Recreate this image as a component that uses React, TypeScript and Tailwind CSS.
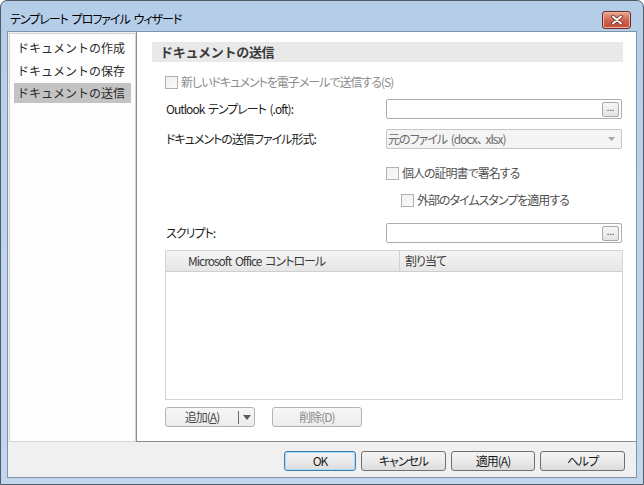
import React from "react";

const jp = "font-['Noto_Sans_CJK_JP','Noto_Sans',sans-serif]";
const palt = "[font-feature-settings:'palt'] tracking-[-1px] [word-spacing:2px]";

function CheckBox({ label, dim = false }: { label: string; dim?: boolean }) {
  return (
    <div className="flex h-[20px] items-center">
      <span className="h-[13px] w-[13px] border border-[#b1b1b1] bg-gradient-to-br from-[#f0f0f0] to-[#fafafa]" />
      <span className={`ml-[3px] text-[12px] ${palt} ${dim ? "text-[#8c8c8c]" : "text-[#505050]"}`}>{label}</span>
    </div>
  );
}

function BrowseBox() {
  return (
    <div className="flex h-[20px] w-[236px] items-center justify-end rounded-[2px] border border-[#abadb3] bg-white pr-[2px]">
      <div className="flex h-[15px] w-[17px] items-center justify-center rounded-[2px] border border-[#a8a8a8] bg-gradient-to-b from-[#f6f6f6] to-[#e4e4e4] pb-[3px] text-[9px] leading-none text-[#444]">
        ...
      </div>
    </div>
  );
}

function FieldRow({ label, children }: { label: string; children: React.ReactNode }) {
  return (
    <div className="flex h-[20px] items-center">
      <div className={`w-[221px] pl-[1px] text-[12px] text-[#1e1e1e] ${palt}`}>{label}</div>
      {children}
    </div>
  );
}

function DlgButton({ label, w, focus = false }: { label: string; w: string; focus?: boolean }) {
  return (
    <button
      type="button"
      className={`flex h-[20px] ${w} items-center justify-center rounded-[3px] border ${
        focus ? "border-[#3c7fb1] shadow-[inset_0_0_0_1px_#a8dcf5]" : "border-[#707070]"
      } bg-gradient-to-b from-[#f3f3f3] via-[#ebebeb] to-[#dcdcdc] text-[12px] text-[#1a1a1a] ${palt}`}
    >
      {label}
    </button>
  );
}

export default function App() {
  const items = ["ドキュメントの作成", "ドキュメントの保存", "ドキュメントの送信"];
  return (
    <div className={`h-[485px] w-[644px] bg-white ${jp}`}>
      <div className="flex h-[485px] w-[644px] flex-col rounded-t-[7px] border border-[#4f5b68] bg-gradient-to-b from-[#b4cde8] via-[#bed4ec] to-[#c2d7ee]">
        {/* title bar */}
        <div className="flex h-[30px] items-center justify-between pl-[9px] pr-[12px]">
          <span className={`pt-[5px] text-[12px] text-black ${palt}`}>テンプレート プロファイル ウィザード</span>
          <div className="mt-[7px] flex h-[18px] w-[29px] items-center justify-center rounded-[3px] border border-[#6b2a22] bg-gradient-to-b from-[#e9a898] via-[#d0654f] to-[#c14a30] shadow-[inset_0_0_0_1px_#f0b5a6]">
            <svg width="12" height="10" viewBox="0 0 12 10">
              <path d="M2 1.5 L10 8.5 M10 1.5 L2 8.5" stroke="#5b2a22" strokeWidth="3.6" strokeLinecap="round" />
              <path d="M2 1.5 L10 8.5 M10 1.5 L2 8.5" stroke="#ffffff" strokeWidth="2" strokeLinecap="round" />
            </svg>
          </div>
        </div>

        {/* client area */}
        <div className="mx-[6px] flex h-[447px] flex-col border border-[#7f93ab] bg-[#f0f0f0]">
          <div className="flex h-[410px]">
            {/* left nav */}
            <div className="ml-[1px] mt-[1px] w-[127px] border border-[#d5d5d5] bg-[#fdfdfd] px-[4px] pt-[4px]">
              {items.map((t, i) => (
                <div
                  key={t}
                  className={`flex h-[20px] items-center pl-[3px] text-[12px] text-[#2a2a2a] ${i > 0 ? "mt-[2.5px]" : ""} ${
                    i === 2 ? "bg-[#c3c3c3]" : ""
                  }`}
                >
                  {t}
                </div>
              ))}
            </div>

            {/* right panel */}
            <div className="flex flex-1 flex-col border-b border-l border-[#8c8c8c] bg-white pl-[28px] pr-[13px]">
              <div className="-ml-[13px] mt-[10px] flex h-[20px] items-center bg-[#e9e9e9] pl-[8px] text-[13px] font-bold tracking-[-0.3px] text-[#3a3a3a]">
                ドキュメントの送信
              </div>

              <div className="mt-[10px]">
                <CheckBox label="新しいドキュメントを電子メールで送信する(S)" dim />
              </div>

              <div className="mt-[7px]">
                <FieldRow label="Outlook テンプレート (.oft):">
                  <BrowseBox />
                </FieldRow>
              </div>

              <div className="mt-[10px]">
                <FieldRow label="ドキュメントの送信ファイル形式:">
                  <div className="flex h-[20px] w-[236px] items-center justify-between rounded-[2px] border border-[#c6c6c6] bg-[#f4f4f4] pl-[1px] pr-[6px]">
                    <span className={`text-[12px] text-[#6a6a6a] ${palt}`}>元のファイル (docx、 xlsx)</span>
                    <svg width="7" height="4" viewBox="0 0 7 4">
                      <path d="M0 0 H7 L3.5 4 Z" fill="#a8a8a8" />
                    </svg>
                  </div>
                </FieldRow>
              </div>

              <div className="ml-[221px] mt-[14px]">
                <CheckBox label="個人の証明書で署名する" />
              </div>
              <div className="ml-[236px] mt-[7px]">
                <CheckBox label="外部のタイムスタンプを適用する" />
              </div>

              <div className="mt-[13px]">
                <FieldRow label="スクリプト:">
                  <BrowseBox />
                </FieldRow>
              </div>

              {/* table */}
              <div className="mt-[7px] h-[150px] border border-[#d4d4d4] bg-white">
                <div className="flex h-[21px] border-b border-[#cfcfcf] bg-gradient-to-b from-[#f4f4f4] to-[#e6e6e6] text-[12px] text-[#3a3a3a]">
                  <div className={`flex w-[234px] items-center border-r border-[#d2d2d2] pl-[22px] ${palt}`}>
                    Microsoft Office コントロール
                  </div>
                  <div className={`flex items-center pl-[5px] ${palt}`}>割り当て</div>
                </div>
              </div>

              <div className="mt-[7px] flex gap-[17px]">
                <div className="flex h-[20px] w-[90px] items-center rounded-[3px] border border-[#b3b3b3] bg-gradient-to-b from-[#f7f7f7] to-[#ececec] text-[12px]">
                  <span className={`w-[72px] text-center text-[#4a4a4a] ${palt}`}>
                    追加(<span className="underline">A</span>)
                  </span>
                  <span className="h-[13px] w-px bg-[#6a6a6a]" />
                  <svg className="ml-[4px]" width="8" height="5" viewBox="0 0 8 5">
                    <path d="M0 0 H8 L4 5 Z" fill="#5a5a5a" />
                  </svg>
                </div>
                <div className={`flex h-[20px] w-[90px] items-center justify-center rounded-[3px] border border-[#b3b3b3] bg-gradient-to-b from-[#f7f7f7] to-[#ececec] text-[12px] text-[#8a8a8a] ${palt}`}>
                  削除(D)
                </div>
              </div>
            </div>
          </div>

          {/* bottom buttons */}
          <div className="flex flex-1 items-start justify-end gap-[5px] pr-[11px] pt-[9px]">
            <DlgButton label="OK" w="w-[72px]" focus />
            <DlgButton label="キャンセル" w="w-[85px]" />
            <DlgButton label="適用(A)" w="w-[84px]" />
            <DlgButton label="ヘルプ" w="w-[85px]" />
          </div>
        </div>
      </div>
    </div>
  );
}
